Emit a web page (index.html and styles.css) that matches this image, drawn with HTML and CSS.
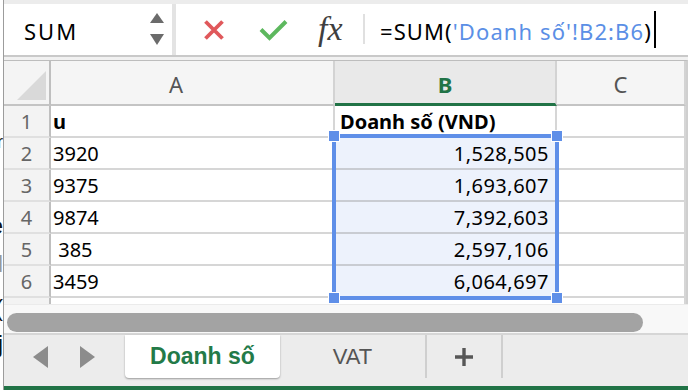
FILE: index.html
```html
<!DOCTYPE html>
<html>
    <head>
        <title>Doanh số</title>
        <link rel="stylesheet" href="styles.css">
    </head>
    <body>
        <div class="Screen">
            <div class="Edge">
                <span class="Bit BitA">r</span>
                <span class="Bit BitB">e</span>
                <span class="Bit BitC">l</span>
                <span class="Bit BitD">(</span>
                <span class="Bit BitE">j</span>
            </div>

            <div class="Excel">
                <div class="FormulaBar">
                    <div class="NameBox">
                        <span class="Name">SUM</span>
                        <svg class="Spin" width="14" height="32" viewBox="0 0 14 32">
                            <polygon points="7,0 14,10 0,10" fill="#6b6b6b"/>
                            <polygon points="0,21 14,21 7,32" fill="#6b6b6b"/>
                        </svg>
                    </div>
                    <div class="BarSplit"></div>
                    <div class="Formula">
                        <svg class="Cancel" width="22" height="22" viewBox="0 0 22 22">
                            <path d="M2.5 2.5 L19.5 19.5 M19.5 2.5 L2.5 19.5" stroke="#e0585b" stroke-width="3.8" fill="none"/>
                        </svg>
                        <svg class="Enter" width="29" height="22" viewBox="0 0 29 22">
                            <path d="M2 10.5 L10.5 19 L27 2.5" stroke="#5db85e" stroke-width="4" fill="none"/>
                        </svg>
                        <span class="Fx">fx</span>
                        <span class="Divider"></span>
                        <span class="Text">=SUM(<span class="Ref">'Doanh số'!B2:B6</span>)</span>
                        <span class="Caret"></span>
                    </div>
                </div>
                <div class="Gap"></div>

                <div class="Sheet">
                    <div class="Corner">
                        <svg width="47" height="43" viewBox="0 0 47 43">
                            <polygon points="13,39 42,39 42,10" fill="#d9d9d9"/>
                        </svg>
                    </div>
                    <div class="ColHead ColA">A</div>
                    <div class="ColHead ColB">B</div>
                    <div class="ColHead">C</div>

                    <div class="RowHead">1</div>
                    <div class="Cell Bold">u</div>
                    <div class="Cell Bold Title">Doanh số (VND)</div>
                    <div class="Cell"></div>

                    <div class="RowHead">2</div>
                    <div class="Cell">3920</div>
                    <div class="Cell Num Picked">1,528,505</div>
                    <div class="Cell"></div>

                    <div class="RowHead">3</div>
                    <div class="Cell">9375</div>
                    <div class="Cell Num Picked">1,693,607</div>
                    <div class="Cell"></div>

                    <div class="RowHead">4</div>
                    <div class="Cell">9874</div>
                    <div class="Cell Num Picked">7,392,603</div>
                    <div class="Cell"></div>

                    <div class="RowHead">5</div>
                    <div class="Cell">&nbsp;385</div>
                    <div class="Cell Num Picked">2,597,106</div>
                    <div class="Cell"></div>

                    <div class="RowHead">6</div>
                    <div class="Cell">3459</div>
                    <div class="Cell Num Picked">6,064,697</div>
                    <div class="Cell"></div>

                    <div class="RowHead Stub"></div>
                    <div class="Cell Stub"></div>
                    <div class="Cell Stub"></div>
                    <div class="Cell Stub"></div>

                    <!-- range B2:B6 drawn over the cells -->
                    <div class="Selection">
                        <span class="Handle TopLeft"></span>
                        <span class="Handle TopRight"></span>
                        <span class="Handle BottomLeft"></span>
                        <span class="Handle BottomRight"></span>
                    </div>
                </div>

                <div class="HScroll">
                    <div class="Thumb"></div>
                </div>

                <div class="Tabs">
                    <div class="Nav">
                        <svg width="15" height="22" viewBox="0 0 15 22"><polygon points="15,0 15,22 0,11" fill="#8c8c8c"/></svg>
                        <svg width="15" height="22" viewBox="0 0 15 22"><polygon points="0,0 15,11 0,22" fill="#8c8c8c"/></svg>
                    </div>
                    <div class="Tab Active">Doanh số</div>
                    <div class="Tab">VAT</div>
                    <div class="Tab Plus">
                        <svg width="20" height="20" viewBox="0 0 20 20">
                            <path d="M10 1 V19 M1 10 H19" stroke="#575757" stroke-width="3.4" fill="none"/>
                        </svg>
                    </div>
                </div>
                <div class="GreenBar"></div>
            </div>
        </div>
    </body>
</html>
```

FILE: styles.css
```css
body {
    margin: 0;
    width: 688px;
    height: 390px;
    overflow: hidden;
    background-color: #fff;
    font-family: "Noto Sans", "Noto Sans CJK SC", sans-serif;
}
.Screen {
    display: flex;
    height: 390px;
}

/* the page behind the window, only a sliver shows */
.Edge {
    width: 3px;
    border-right: 1px solid #9c9c9c;
    overflow: hidden;
    display: flex;
    flex-direction: column;
    align-items: flex-end;
    font-family: "Liberation Sans", sans-serif;
    font-size: 24px;
    line-height: 24px;
    color: #111;
}
.Bit {
    display: block;
}
.BitA { margin-top: 130px; font-size: 18px; }
.BitB { margin-top: 60px; }
.BitC { margin-top: 14px; color: #999; }
.BitD { margin-top: 20px; }
.BitE { margin-top: 12px; }

.Excel {
    flex: 1;
    display: flex;
    flex-direction: column;
    background-color: #ececec;
    padding-top: 4px;
}

/* formula bar */
.FormulaBar {
    display: flex;
    height: 51px;
    border-bottom: 2px solid #c9c9c9;
}
.NameBox {
    width: 168px;
    box-sizing: border-box;
    background-color: #fff;
    display: flex;
    align-items: center;
    justify-content: space-between;
    padding: 0 8px 0 20px;
}
.Name {
    font-size: 22px;
    letter-spacing: 2px;
    color: #000;
    padding-top: 3px;
}
.BarSplit {
    width: 4px;
    background-color: #e3e3e3;
}
.Formula {
    flex: 1;
    background-color: #fff;
    display: flex;
    align-items: center;
    padding-left: 27px;
}
.Cancel {
    margin-top: 2px;
}
.Enter {
    margin-left: 34px;
    margin-top: 2px;
}
.Fx {
    margin-left: 30px;
    font-family: "Liberation Serif", serif;
    font-style: italic;
    font-size: 34px;
    line-height: 40px;
    color: #3f3f3f;
    width: 33px;
}
.Divider {
    width: 2px;
    height: 30px;
    margin-left: 12px;
    background-color: #e0e0e0;
}
.Text {
    margin-left: 15px;
    font-size: 22px;
    letter-spacing: 1.1px;
    color: #000;
    padding-top: 3px;
}
.Ref {
    color: #5b8fe6;
}
.Caret {
    width: 2px;
    height: 37px;
    margin-left: 2px;
    background-color: #000;
}
.Gap {
    height: 3px;
    background-color: #f1f1f1;
}

/* grid */
.Sheet {
    position: relative;
    display: grid;
    grid-template-columns: 47px 284px 222px 1fr;
    grid-template-rows: 45px repeat(6, 32px) 6px;
    background-color: #fff;
    border-top: 1px solid #bdbdbd;
    border-right: 2px solid #cfcfcf;
}
.Sheet > div {
    box-sizing: border-box;
}
.Corner {
    background-color: #f4f4f4;
    border-right: 2px solid #bfbfbf;
    border-bottom: 2px solid #c4c4c4;
}
.Corner svg {
    display: block;
}
.ColHead {
    background-color: #f5f5f5;
    border-right: 2px solid #d3d3d3;
    border-bottom: 2px solid #c4c4c4;
    display: flex;
    align-items: center;
    justify-content: center;
    font-size: 22px;
    color: #555;
    padding-top: 4px;
}
.ColA {
    padding-right: 32px;
}
.ColB {
    background-color: #e9e9e9;
    border-bottom: 3px solid #217346;
    color: #217346;
    font-weight: bold;
}
.RowHead {
    background-color: #f3f3f3;
    border-right: 2px solid #bfbfbf;
    border-bottom: 2px solid #e0e0e0;
    text-align: center;
    font-size: 20px;
    line-height: 31px;
    color: #666;
}
.Cell {
    border-right: 2px solid #d6d6d6;
    border-bottom: 2px solid #d6d6d6;
    font-size: 20px;
    line-height: 31px;
    color: #000;
    padding-left: 2px;
    white-space: nowrap;
    overflow: hidden;
}
.Bold {
    font-weight: bold;
}
.Title {
    padding-left: 5px;
}
.Num {
    text-align: right;
    padding-right: 6px;
    letter-spacing: 0.5px;
}
.Picked {
    background-color: #edf2fc;
    border-bottom-color: #c9ccd2;
}
.Stub {
    border-bottom: none;
}
.Selection {
    position: absolute;
    left: 328px;
    top: 73px;
    width: 227px;
    height: 166px;
    box-sizing: border-box;
    border: 4px solid #5f8fe8;
}
.Handle {
    position: absolute;
    width: 10px;
    height: 10px;
    background-color: #5f8fe8;
    border: 1px solid #fff;
}
.TopLeft { left: -8px; top: -8px; }
.TopRight { right: -8px; top: -8px; }
.BottomLeft { left: -8px; bottom: -8px; }
.BottomRight { right: -8px; bottom: -8px; }

/* horizontal scroll bar */
.HScroll {
    height: 32px;
    box-sizing: border-box;
    background-color: #f8f8f8;
    border-top: 1px solid #ebebeb;
    border-bottom: 2px solid #d6d6d6;
    padding: 8px 0 0 3px;
}
.Thumb {
    width: 636px;
    height: 19px;
    border-radius: 10px;
    background-color: #a3a3a3;
}

/* sheet tabs */
.Tabs {
    display: flex;
    align-items: flex-start;
    height: 51px;
    background-color: #ececec;
    font-family: "Liberation Sans", Arial, sans-serif;
}
.Nav {
    width: 121px;
    height: 43px;
    display: flex;
    align-items: center;
    gap: 32px;
    padding-left: 29px;
    box-sizing: border-box;
}
.Tab {
    width: 147px;
    height: 43px;
    box-sizing: border-box;
    display: flex;
    align-items: center;
    justify-content: center;
    border-right: 2px solid #cfcfcf;
    font-size: 22px;
    color: #555;
}
.Active {
    width: 155px;
    background-color: #fff;
    border-right: none;
    border-radius: 0 0 4px 4px;
    box-shadow: 0 1px 2px rgba(0, 0, 0, 0.35);
    font-size: 23px;
    font-weight: bold;
    color: #237a48;
}
.Plus {
    width: 76px;
}
.GreenBar {
    height: 4px;
    background-color: #217346;
}
```
